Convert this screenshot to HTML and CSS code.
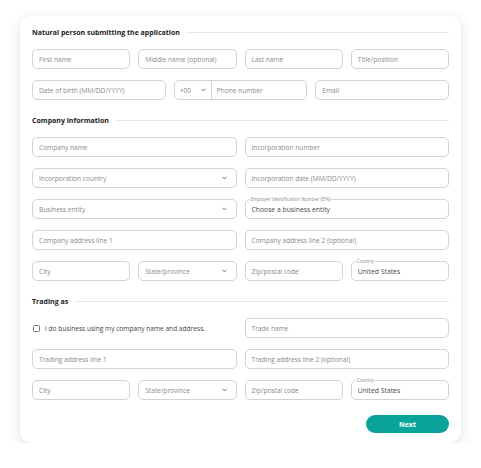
FILE: index.html
```html
<!DOCTYPE html>
<html lang="en">
<head>
<meta charset="utf-8">
<title>Application</title>
<link rel="stylesheet" href="styles.css">
</head>
<body>
<div class="card">
  <section class="section">
    <div class="sec-head"><span>Natural person submitting the application</span><i class="rule"></i></div>
    <div class="rows">
      <div class="grid g4">
        <div class="field">First name</div>
        <div class="field">Middle name (optional)</div>
        <div class="field">Last name</div>
        <div class="field">Title/position</div>
      </div>
      <div class="grid g3">
        <div class="field">Date of birth (MM/DD/YYYY)</div>
        <div class="field phone">
          <span class="code">+00<svg class="chev" viewBox="0 0 6 4"><polyline points="0.5,0.5 3,3.2 5.5,0.5"/></svg></span>
          <span class="num">Phone number</span>
        </div>
        <div class="field">Email</div>
      </div>
    </div>
  </section>

  <section class="section">
    <div class="sec-head"><span>Company information</span><i class="rule"></i></div>
    <div class="rows">
      <div class="grid g2">
        <div class="field">Company name</div>
        <div class="field">Incorporation number</div>
      </div>
      <div class="grid g2">
        <div class="field select">Incorporation country<svg class="chev" viewBox="0 0 6 4"><polyline points="0.5,0.5 3,3.2 5.5,0.5"/></svg></div>
        <div class="field">Incorporation date (MM/DD/YYYY)</div>
      </div>
      <div class="grid g2">
        <div class="field select">Business entity<svg class="chev" viewBox="0 0 6 4"><polyline points="0.5,0.5 3,3.2 5.5,0.5"/></svg></div>
        <div class="field filled"><span class="legend">Employer Identification Number (EIN)</span>Choose a business entity</div>
      </div>
      <div class="grid g2">
        <div class="field">Company address line 1</div>
        <div class="field">Company address line 2 (optional)</div>
      </div>
      <div class="grid g4">
        <div class="field">City</div>
        <div class="field select">State/province<svg class="chev" viewBox="0 0 6 4"><polyline points="0.5,0.5 3,3.2 5.5,0.5"/></svg></div>
        <div class="field">Zip/postal code</div>
        <div class="field filled"><span class="legend">Country</span>United States</div>
      </div>
    </div>
  </section>

  <section class="section">
    <div class="sec-head"><span>Trading as</span><i class="rule"></i></div>
    <div class="rows">
      <div class="grid g2">
        <label class="check"><span class="box"></span>I do business using my company name and address.</label>
        <div class="field">Trade name</div>
      </div>
      <div class="grid g2">
        <div class="field">Trading address line 1</div>
        <div class="field">Trading address line 2 (optional)</div>
      </div>
      <div class="grid g4">
        <div class="field">City</div>
        <div class="field select">State/province<svg class="chev" viewBox="0 0 6 4"><polyline points="0.5,0.5 3,3.2 5.5,0.5"/></svg></div>
        <div class="field">Zip/postal code</div>
        <div class="field filled"><span class="legend">Country</span>United States</div>
      </div>
    </div>
  </section>

  <div class="actions"><button class="next">Next</button></div>
</div>
</body>
</html>
```

FILE: styles.css
```css
* { box-sizing: border-box; }
html, body { margin: 0; padding: 0; background: #fff; }
body {
  font-family: "Open Sans", "Noto Sans", "Liberation Sans", sans-serif;
  color: #333;
  padding: 16px 0 0 20px;
}
.card {
  width: 441px;
  background: #fff;
  border-radius: 12px;
  box-shadow: 0 3px 14px rgba(0, 0, 0, 0.13);
  padding: 11px 12px 10px;
}
.section + .section { margin-top: 15px; }
.sec-head {
  height: 10px;
  display: flex;
  align-items: center;
  gap: 6px;
  margin-bottom: 12px;
  font-size: 7px;
  font-weight: 700;
  color: #222;
  white-space: nowrap;
}
.rule { flex: 1; height: 1px; background: #e4e7eb; }
.rows { display: flex; flex-direction: column; gap: 11px; }
.grid { display: grid; gap: 8px; }
.g2 { grid-template-columns: 1fr 1fr; }
.g3 { grid-template-columns: 1fr 1fr 1fr; }
.g4 { grid-template-columns: 1fr 1fr 1fr 1fr; }
.field {
  position: relative;
  height: 20px;
  border: 1px solid #d3d3d3;
  border-radius: 5px;
  padding: 0 6px;
  display: flex;
  align-items: center;
  font-size: 6.6px;
  color: #8a8a8a;
  white-space: nowrap;
}
.field.select { justify-content: space-between; padding-right: 9px; }
.chev { width: 5px; height: 4px; fill: none; stroke: #555; stroke-width: 0.9; }
.field.filled { color: #4a4a4a; font-size: 6.8px; }
.legend {
  position: absolute;
  left: 4px;
  top: -3px;
  font-size: 4.6px;
  line-height: 5px;
  color: #8a8a8a;
  background: #fff;
  padding: 0 1px;
}
.phone { padding: 0; }
.phone .code {
  width: 37px;
  height: 100%;
  display: flex;
  align-items: center;
  justify-content: space-between;
  padding: 0 5px 0 5px;
  border-right: 1px solid #d3d3d3;
}
.phone .num { padding-left: 5px; }
.check {
  display: flex;
  align-items: center;
  gap: 5px;
  font-size: 6.6px;
  color: #444;
  padding-left: 1px;
}
.box {
  width: 7px;
  height: 7px;
  border: 1px solid #777;
  border-radius: 1.5px;
}
.actions { display: flex; justify-content: flex-end; margin-top: 15px; }
.next {
  width: 83px;
  height: 18px;
  border: none;
  border-radius: 9px;
  background: #0aa39a;
  color: #fff;
  font-family: inherit;
  font-size: 7px;
  font-weight: 700;
  padding: 0;
}
```
